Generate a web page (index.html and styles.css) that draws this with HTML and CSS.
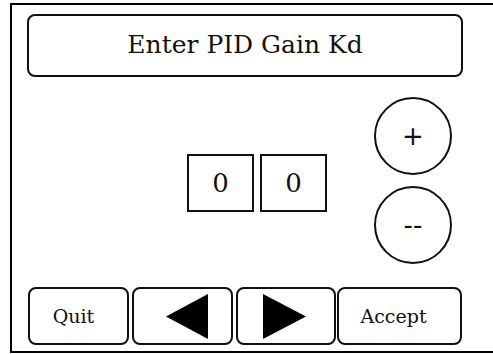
FILE: index.html
```html
<!DOCTYPE html>
<html>
<head>
    <title>PID Gain</title>
    <link rel="stylesheet" href="styles.css">
</head>
<body>
    <!-- Screen frame -->
    <div class="screen">
        <!-- Title -->
        <div class="title">Enter PID Gain Kd</div>

        <!-- Value entry -->
        <div class="entry">
            <div class="digits">
                <div class="digit">0</div>
                <div class="digit">0</div>
            </div>
            <div class="steppers">
                <div class="circle">+</div>
                <div class="circle">--</div>
            </div>
        </div>

        <!-- Bottom buttons -->
        <div class="buttons">
            <div class="btn quit">Quit</div>
            <div class="btn prev">
                <svg width="42" height="45" viewBox="0 0 42 45"><polygon points="42,0 42,45 0,22.5" fill="#000"/></svg>
            </div>
            <div class="btn next">
                <svg width="43" height="45" viewBox="0 0 43 45"><polygon points="0,0 0,45 43,22.5" fill="#000"/></svg>
            </div>
            <div class="btn accept">Accept</div>
        </div>
    </div>
</body>
</html>
```
FILE: styles.css
```css
html, body {
    margin: 0;
    padding: 0;
    background-color: white;
    overflow: hidden;
}
body {
    font-family: "DejaVu Serif", serif;
    color: #111;
}
.screen {
    margin: 3px 0 0 10px;
    width: 483px;
    height: 350px;
    box-sizing: border-box;
    border: 2px solid black;
    border-right: none;
    padding: 9px 0 6px 15px;
    display: flex;
    flex-direction: column;
}
.title {
    width: 436px;
    height: 63px;
    box-sizing: border-box;
    border: 2px solid #111;
    border-radius: 8px;
    display: flex;
    align-items: center;
    justify-content: center;
    font-size: 25px;
    padding-bottom: 2px;
}
.entry {
    flex: 1;
    display: flex;
    align-items: center;
    padding-left: 160px;
}
.digits {
    display: flex;
    gap: 6px;
    margin-top: 2px;
}
.digit {
    width: 67px;
    height: 58px;
    box-sizing: border-box;
    border: 2px solid #111;
    display: flex;
    align-items: center;
    justify-content: center;
    font-size: 26px;
}
.steppers {
    display: flex;
    flex-direction: column;
    gap: 11px;
    margin-left: 47px;
    margin-top: -3px;
}
.circle {
    width: 78px;
    height: 78px;
    box-sizing: border-box;
    border: 2px solid #111;
    border-radius: 50%;
    display: flex;
    align-items: center;
    justify-content: center;
    font-family: "DejaVu Sans", sans-serif;
    font-size: 26px;
}
.buttons {
    display: flex;
    gap: 3px;
    height: 58px;
    padding-left: 1px;
}
.btn {
    box-sizing: border-box;
    border: 2px solid #111;
    border-radius: 8px;
    display: flex;
    align-items: center;
    justify-content: center;
    font-size: 19px;
}
.quit {
    width: 101px;
    padding-right: 10px;
}
.prev {
    width: 101px;
    padding-left: 8px;
}
.next {
    width: 100px;
    padding-right: 4px;
}
.accept {
    width: 125px;
    margin-left: -2px;
    padding-right: 12px;
}
```
